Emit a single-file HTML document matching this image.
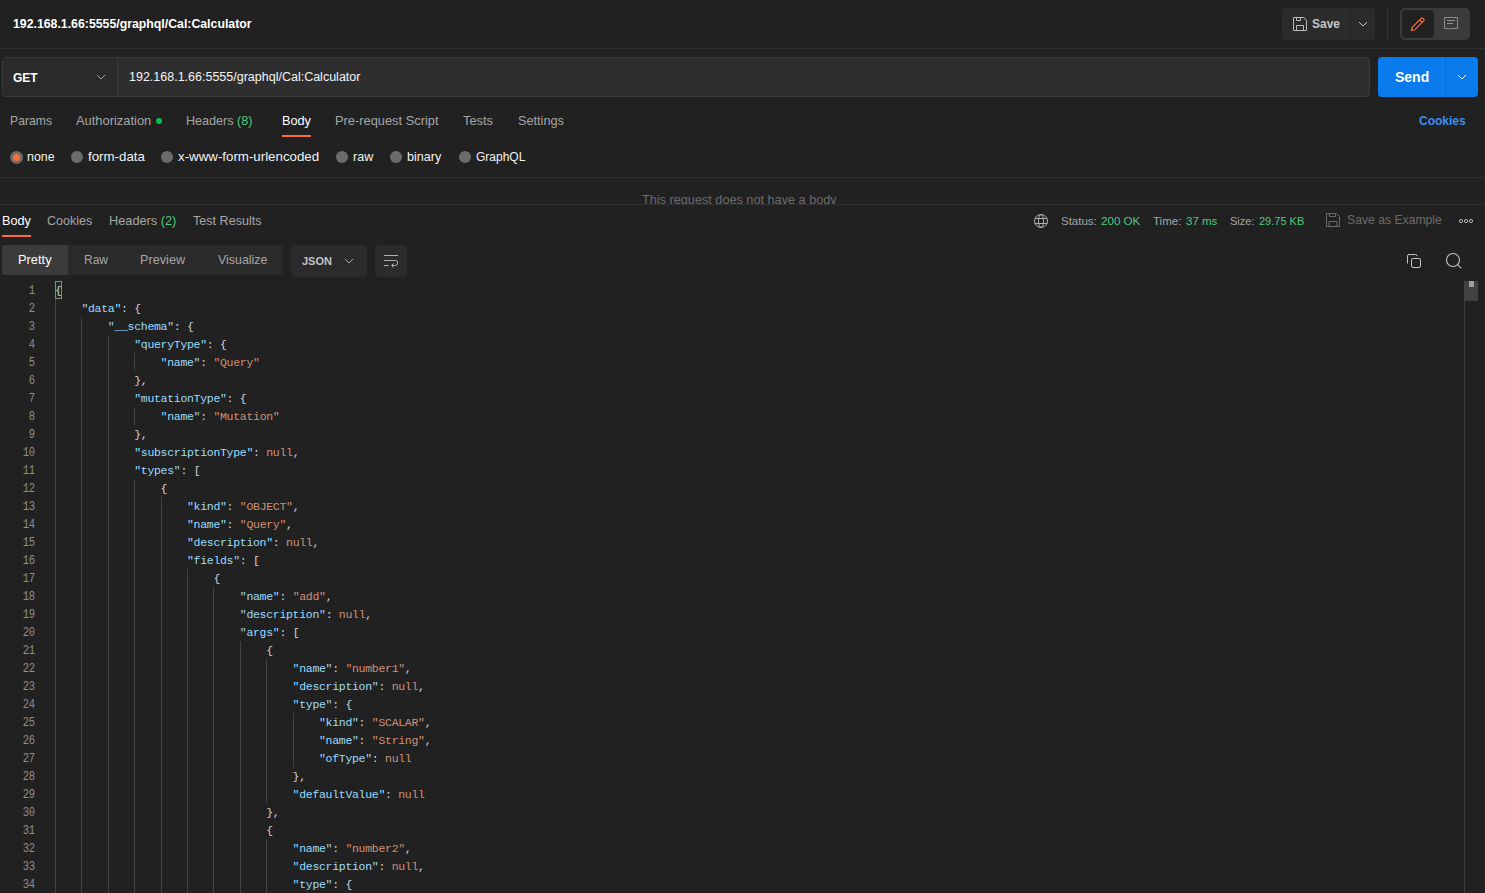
<!DOCTYPE html>
<html><head><meta charset="utf-8">
<style>
*{box-sizing:border-box;margin:0;padding:0}
html,body{width:1485px;height:893px;overflow:hidden;background:#212121;font-family:"Liberation Sans",sans-serif;color:#fff}
.a{position:absolute;white-space:nowrap}
.line{position:absolute;left:0;width:1485px;height:1px;background:#303030}
.tab{position:absolute;top:114px;font-size:12.7px;color:#a6a6a6;line-height:15px}
.rtab{position:absolute;top:214px;font-size:12.7px;color:#a6a6a6;line-height:15px}
.green{color:#4dca7f}
.radio{position:absolute;top:151px;width:12px;height:12px;border-radius:50%;background:#6b6b6b}
.rlbl{position:absolute;top:150px;font-size:12.8px;color:#f2f2f2;line-height:15px}
.g{position:absolute;width:1px;height:18px;background:#44433e}
.ln{position:absolute;left:0;width:35px;text-align:right;font-family:"Liberation Mono",monospace;font-size:12px;letter-spacing:-0.2px;line-height:18px;color:#8e8e8e;height:18px;transform:scaleX(0.88);transform-origin:35px 0}
.cl{position:absolute;font-family:"Liberation Mono",monospace;font-size:11.5px;letter-spacing:-0.3px;line-height:18px;height:18px;white-space:pre;color:#d4d4d4}
.cl i{font-style:normal}
.k{color:#9cdcfe}.s{color:#ce9178}.n{color:#ce9178}.p{color:#d4d4d4}.b{color:#d4d4d4}
</style></head><body>
<!-- header -->
<div class="a" style="left:13px;top:17px;font-size:12.3px;font-weight:700;line-height:15px;color:#fff">192.168.1.66:5555/graphql/Cal:Calculator</div>
<!-- save -->
<div class="a" style="left:1282px;top:8px;width:68px;height:32px;background:#2b2b2b;border-radius:4px 0 0 4px"></div>
<svg class="a" style="left:1292px;top:16px" width="16" height="16" viewBox="0 0 16 16" fill="none" stroke="#bdbdbd" stroke-width="1"><path d="M1.5 1.5h10.2l2.8 2.8v10.2h-13z"/><path d="M4.5 1.5v3h4v-3"/><path d="M4.5 14.5v-5h7v5"/></svg>
<div class="a" style="left:1312px;top:17px;font-size:12px;font-weight:700;line-height:15px;color:#c6c6c6">Save</div>
<div class="a" style="left:1351px;top:8px;width:24px;height:32px;background:#2b2b2b;border-radius:0 4px 4px 0"></div>
<svg class="a" style="left:1358px;top:20px" width="10" height="8" viewBox="0 0 10 8" fill="none" stroke="#c4c4c4" stroke-width="1"><path d="M1 2l4 4l4-4"/></svg>
<div class="a" style="left:1387px;top:8px;width:1px;height:32px;background:#303030"></div>
<div class="a" style="left:1400px;top:8px;width:70px;height:32px;background:#3b3b3b;border-radius:5px"></div>
<div class="a" style="left:1402px;top:10px;width:32px;height:28px;background:#212121;border-radius:4px"></div>
<svg class="a" style="left:1410px;top:16px" width="16" height="16" viewBox="0 0 16 16" fill="none" stroke="#ff6c37" stroke-width="1.2"><path d="M1.5 14.5l0.7-3.2l9-9a1.2 1.2 0 0 1 1.7 0l0.8 0.8a1.2 1.2 0 0 1 0 1.7l-9 9z"/><path d="M9.7 3.8l2.5 2.5"/></svg>
<svg class="a" style="left:1443px;top:16px" width="16" height="16" viewBox="0 0 16 16" fill="none" stroke="#8c8c8c" stroke-width="1"><path d="M1.5 1.5h13v11h-6l-1 1.3l-1-1.3h-5z"/><path d="M4 4.5h8M4 7.5h6"/></svg>
<div class="line" style="top:48px"></div>
<!-- url bar -->
<div class="a" style="left:2px;top:57px;width:1368px;height:40px;background:#2e2e2e;border:1px solid #3a3a3a;border-radius:4px"></div>
<div class="a" style="left:3px;top:58px;width:114px;height:38px;background:#2a2a2a;border-radius:3px 0 0 3px"></div>
<div class="a" style="left:117px;top:58px;width:1px;height:38px;background:#3a3a3a"></div>
<div class="a" style="left:13px;top:71px;font-size:12px;font-weight:700;line-height:15px;color:#fff">GET</div>
<svg class="a" style="left:96px;top:73px" width="10" height="8" viewBox="0 0 10 8" fill="none" stroke="#a0a0a0" stroke-width="1"><path d="M1 2l4 4l4-4"/></svg>
<div class="a" style="left:129px;top:70px;font-size:12.5px;line-height:15px;color:#f4f4f4">192.168.1.66:5555/graphql/Cal:Calculator</div>
<!-- send -->
<div class="a" style="left:1378px;top:57px;width:100px;height:40px;background:#097bed;border-radius:4px"></div>
<div class="a" style="left:1445px;top:57px;width:1px;height:40px;background:#0a6fd6"></div>
<div class="a" style="left:1395px;top:69px;font-size:14px;font-weight:700;line-height:16px;color:#fff">Send</div>
<svg class="a" style="left:1457px;top:73px" width="10" height="8" viewBox="0 0 10 8" fill="none" stroke="#fff" stroke-width="1"><path d="M1 2l4 4l4-4"/></svg>
<!-- tabs -->
<div class="tab" style="left:10px;font-size:12.2px">Params</div>
<div class="tab" style="left:76px;margin-top:-1px;font-size:12.9px">Authorization</div>
<div class="a" style="left:156px;top:118px;width:6px;height:6px;border-radius:50%;background:#0cbb52"></div>
<div class="tab" style="left:186px;font-size:12.6px">Headers <span class="green">(8)</span></div>
<div class="tab" style="left:282px;color:#fff">Body</div>
<div class="a" style="left:282px;top:135px;width:29px;height:2px;background:#ff6c37"></div>
<div class="tab" style="left:335px;margin-top:-1px;font-size:12.85px">Pre-request Script</div>
<div class="tab" style="left:463px;margin-top:-1px;font-size:12.8px">Tests</div>
<div class="tab" style="left:518px">Settings</div>
<div class="a" style="left:1419px;top:114px;font-size:12px;font-weight:700;line-height:15px;color:#3d8ef5">Cookies</div>
<!-- radios -->
<div class="radio" style="left:10px;width:13px;height:13px;background:#6b6b6b"></div>
<div class="a" style="left:13px;top:154px;width:7px;height:7px;border-radius:50%;background:#ff6c37"></div>
<div class="rlbl" style="left:27px;font-size:12.4px">none</div>
<div class="radio" style="left:71px"></div><div class="rlbl" style="left:88px;margin-top:-1px;font-size:13.3px">form-data</div>
<div class="radio" style="left:161px"></div><div class="rlbl" style="left:178px;margin-top:-1px;font-size:13.3px">x-www-form-urlencoded</div>
<div class="radio" style="left:336px"></div><div class="rlbl" style="left:353px;font-size:12.6px">raw</div>
<div class="radio" style="left:390px"></div><div class="rlbl" style="left:407px;font-size:12.6px">binary</div>
<div class="radio" style="left:459px"></div><div class="rlbl" style="left:476px;font-size:12px">GraphQL</div>
<div class="line" style="top:177px"></div>
<div class="a" style="left:0;top:178px;width:1485px;height:26px;overflow:hidden"><div class="a" style="left:642px;top:15px;font-size:12.7px;line-height:15px;color:#6b6b6b">This request does not have a body</div></div>
<div class="line" style="top:204px"></div>
<!-- response tabs -->
<div class="rtab" style="left:2px;color:#fff">Body</div>
<div class="a" style="left:2px;top:235px;width:29px;height:2px;background:#ff6c37"></div>
<div class="rtab" style="left:47px;font-size:12.5px">Cookies</div>
<div class="rtab" style="left:109px;margin-top:-1px;font-size:12.76px">Headers <span class="green">(2)</span></div>
<div class="rtab" style="left:193px;font-size:12.58px">Test Results</div>
<!-- status -->
<svg class="a" style="left:1034px;top:214px" width="14" height="14" viewBox="0 0 14 14" fill="none" stroke="#b0b0b0" stroke-width="1"><circle cx="7" cy="7" r="6.5"/><ellipse cx="7" cy="7" rx="2.5" ry="6.5"/><path d="M1 4.5h12M1 9.5h12"/></svg>
<div class="a" style="left:1061px;top:214px;font-size:11.5px;line-height:14px;color:#a6a6a6">Status:</div><div class="a green" style="left:1101px;top:214px;font-size:11.6px;line-height:14px">200 OK</div>
<div class="a" style="left:1153px;top:214px;font-size:11.5px;line-height:14px;color:#a6a6a6">Time:</div><div class="a green" style="left:1186px;top:214px;font-size:11.5px;line-height:14px">37 ms</div>
<div class="a" style="left:1230px;top:214px;font-size:11px;line-height:14px;color:#a6a6a6">Size:</div><div class="a green" style="left:1259px;top:214px;font-size:11px;line-height:14px">29.75 KB</div>
<svg class="a" style="left:1326px;top:213px" width="14" height="14" viewBox="0 0 14 14" fill="none" stroke="#6b6b6b" stroke-width="1"><path d="M0.5 0.5h10l3 3v10h-13z"/><path d="M3.5 0.5v3h6v-3"/><path d="M3 13.5v-5h8v5"/></svg>
<div class="a" style="left:1347px;top:213px;font-size:12.2px;line-height:15px;color:#6b6b6b">Save as Example</div>
<svg class="a" style="left:1458px;top:218px" width="16" height="6" viewBox="0 0 16 6" fill="none" stroke="#b4b4b4" stroke-width="1"><circle cx="3" cy="3" r="1.6"/><circle cx="8" cy="3" r="1.6"/><circle cx="13" cy="3" r="1.6"/></svg>
<!-- segmented -->
<div class="a" style="left:2px;top:245px;width:281px;height:30px;background:#2b2b2b;border-radius:4px"></div>
<div class="a" style="left:2px;top:245px;width:66px;height:30px;background:#3b3b3b;border-radius:4px 0 0 4px"></div>
<div class="a" style="left:18px;top:252px;font-size:12.86px;line-height:15px;color:#fff">Pretty</div>
<div class="a" style="left:84px;top:253px;font-size:12px;line-height:15px;color:#a6a6a6">Raw</div>
<div class="a" style="left:140px;top:253px;font-size:12.7px;line-height:15px;color:#a6a6a6">Preview</div>
<div class="a" style="left:218px;top:253px;font-size:12.4px;line-height:15px;color:#a6a6a6">Visualize</div>
<div class="a" style="left:291px;top:245px;width:76px;height:32px;background:#2b2b2b;border-radius:4px"></div>
<div class="a" style="left:302px;top:254px;font-size:11px;font-weight:700;line-height:14px;color:#c4c4c4">JSON</div>
<svg class="a" style="left:344px;top:257px" width="10" height="8" viewBox="0 0 10 8" fill="none" stroke="#a0a0a0" stroke-width="1"><path d="M1 2l4 4l4-4"/></svg>
<div class="a" style="left:375px;top:245px;width:32px;height:32px;background:#2b2b2b;border-radius:4px"></div>
<svg class="a" style="left:383px;top:254px" width="16" height="14" viewBox="0 0 16 14" fill="none" stroke="#b0b0b0" stroke-width="1"><path d="M1 1.5h14M1 6.5h11.2a2.5 2.5 0 0 1 0 5h-3.2M10.5 9.5l-2 2l2 2M1 11.5h4.5"/></svg>
<svg class="a" style="left:1406px;top:253px" width="16" height="16" viewBox="0 0 16 16" fill="none" stroke="#c4c4c4" stroke-width="1"><path d="M1.5 10.5v-7.5a1.5 1.5 0 0 1 1.5-1.5h6.5a1.5 1.5 0 0 1 1.5 1.5"/><rect x="5.5" y="5.5" width="9" height="9" rx="1.5"/></svg>
<svg class="a" style="left:1445px;top:252px" width="18" height="18" viewBox="0 0 18 18" fill="none" stroke="#c4c4c4" stroke-width="1.1"><circle cx="8" cy="8" r="6.5"/><path d="M12.8 12.8l3.5 3.5"/></svg>
<!-- code -->
<div class="a" style="left:55px;top:281px;width:7px;height:18px;border:1px solid #888;background:#1e2a20"></div>
<div class="g" style="left:55px;top:299px"></div>
<div class="g" style="left:55px;top:317px"></div>
<div class="g" style="left:81px;top:317px"></div>
<div class="g" style="left:55px;top:335px"></div>
<div class="g" style="left:81px;top:335px"></div>
<div class="g" style="left:108px;top:335px"></div>
<div class="g" style="left:55px;top:353px"></div>
<div class="g" style="left:81px;top:353px"></div>
<div class="g" style="left:108px;top:353px"></div>
<div class="g" style="left:134px;top:353px"></div>
<div class="g" style="left:55px;top:371px"></div>
<div class="g" style="left:81px;top:371px"></div>
<div class="g" style="left:108px;top:371px"></div>
<div class="g" style="left:55px;top:389px"></div>
<div class="g" style="left:81px;top:389px"></div>
<div class="g" style="left:108px;top:389px"></div>
<div class="g" style="left:55px;top:407px"></div>
<div class="g" style="left:81px;top:407px"></div>
<div class="g" style="left:108px;top:407px"></div>
<div class="g" style="left:134px;top:407px"></div>
<div class="g" style="left:55px;top:425px"></div>
<div class="g" style="left:81px;top:425px"></div>
<div class="g" style="left:108px;top:425px"></div>
<div class="g" style="left:55px;top:443px"></div>
<div class="g" style="left:81px;top:443px"></div>
<div class="g" style="left:108px;top:443px"></div>
<div class="g" style="left:55px;top:461px"></div>
<div class="g" style="left:81px;top:461px"></div>
<div class="g" style="left:108px;top:461px"></div>
<div class="g" style="left:55px;top:479px"></div>
<div class="g" style="left:81px;top:479px"></div>
<div class="g" style="left:108px;top:479px"></div>
<div class="g" style="left:134px;top:479px"></div>
<div class="g" style="left:55px;top:497px"></div>
<div class="g" style="left:81px;top:497px"></div>
<div class="g" style="left:108px;top:497px"></div>
<div class="g" style="left:134px;top:497px"></div>
<div class="g" style="left:161px;top:497px"></div>
<div class="g" style="left:55px;top:515px"></div>
<div class="g" style="left:81px;top:515px"></div>
<div class="g" style="left:108px;top:515px"></div>
<div class="g" style="left:134px;top:515px"></div>
<div class="g" style="left:161px;top:515px"></div>
<div class="g" style="left:55px;top:533px"></div>
<div class="g" style="left:81px;top:533px"></div>
<div class="g" style="left:108px;top:533px"></div>
<div class="g" style="left:134px;top:533px"></div>
<div class="g" style="left:161px;top:533px"></div>
<div class="g" style="left:55px;top:551px"></div>
<div class="g" style="left:81px;top:551px"></div>
<div class="g" style="left:108px;top:551px"></div>
<div class="g" style="left:134px;top:551px"></div>
<div class="g" style="left:161px;top:551px"></div>
<div class="g" style="left:55px;top:569px"></div>
<div class="g" style="left:81px;top:569px"></div>
<div class="g" style="left:108px;top:569px"></div>
<div class="g" style="left:134px;top:569px"></div>
<div class="g" style="left:161px;top:569px"></div>
<div class="g" style="left:187px;top:569px"></div>
<div class="g" style="left:55px;top:587px"></div>
<div class="g" style="left:81px;top:587px"></div>
<div class="g" style="left:108px;top:587px"></div>
<div class="g" style="left:134px;top:587px"></div>
<div class="g" style="left:161px;top:587px"></div>
<div class="g" style="left:187px;top:587px"></div>
<div class="g" style="left:213px;top:587px"></div>
<div class="g" style="left:55px;top:605px"></div>
<div class="g" style="left:81px;top:605px"></div>
<div class="g" style="left:108px;top:605px"></div>
<div class="g" style="left:134px;top:605px"></div>
<div class="g" style="left:161px;top:605px"></div>
<div class="g" style="left:187px;top:605px"></div>
<div class="g" style="left:213px;top:605px"></div>
<div class="g" style="left:55px;top:623px"></div>
<div class="g" style="left:81px;top:623px"></div>
<div class="g" style="left:108px;top:623px"></div>
<div class="g" style="left:134px;top:623px"></div>
<div class="g" style="left:161px;top:623px"></div>
<div class="g" style="left:187px;top:623px"></div>
<div class="g" style="left:213px;top:623px"></div>
<div class="g" style="left:55px;top:641px"></div>
<div class="g" style="left:81px;top:641px"></div>
<div class="g" style="left:108px;top:641px"></div>
<div class="g" style="left:134px;top:641px"></div>
<div class="g" style="left:161px;top:641px"></div>
<div class="g" style="left:187px;top:641px"></div>
<div class="g" style="left:213px;top:641px"></div>
<div class="g" style="left:240px;top:641px"></div>
<div class="g" style="left:55px;top:659px"></div>
<div class="g" style="left:81px;top:659px"></div>
<div class="g" style="left:108px;top:659px"></div>
<div class="g" style="left:134px;top:659px"></div>
<div class="g" style="left:161px;top:659px"></div>
<div class="g" style="left:187px;top:659px"></div>
<div class="g" style="left:213px;top:659px"></div>
<div class="g" style="left:240px;top:659px"></div>
<div class="g" style="left:266px;top:659px"></div>
<div class="g" style="left:55px;top:677px"></div>
<div class="g" style="left:81px;top:677px"></div>
<div class="g" style="left:108px;top:677px"></div>
<div class="g" style="left:134px;top:677px"></div>
<div class="g" style="left:161px;top:677px"></div>
<div class="g" style="left:187px;top:677px"></div>
<div class="g" style="left:213px;top:677px"></div>
<div class="g" style="left:240px;top:677px"></div>
<div class="g" style="left:266px;top:677px"></div>
<div class="g" style="left:55px;top:695px"></div>
<div class="g" style="left:81px;top:695px"></div>
<div class="g" style="left:108px;top:695px"></div>
<div class="g" style="left:134px;top:695px"></div>
<div class="g" style="left:161px;top:695px"></div>
<div class="g" style="left:187px;top:695px"></div>
<div class="g" style="left:213px;top:695px"></div>
<div class="g" style="left:240px;top:695px"></div>
<div class="g" style="left:266px;top:695px"></div>
<div class="g" style="left:55px;top:713px"></div>
<div class="g" style="left:81px;top:713px"></div>
<div class="g" style="left:108px;top:713px"></div>
<div class="g" style="left:134px;top:713px"></div>
<div class="g" style="left:161px;top:713px"></div>
<div class="g" style="left:187px;top:713px"></div>
<div class="g" style="left:213px;top:713px"></div>
<div class="g" style="left:240px;top:713px"></div>
<div class="g" style="left:266px;top:713px"></div>
<div class="g" style="left:293px;top:713px"></div>
<div class="g" style="left:55px;top:731px"></div>
<div class="g" style="left:81px;top:731px"></div>
<div class="g" style="left:108px;top:731px"></div>
<div class="g" style="left:134px;top:731px"></div>
<div class="g" style="left:161px;top:731px"></div>
<div class="g" style="left:187px;top:731px"></div>
<div class="g" style="left:213px;top:731px"></div>
<div class="g" style="left:240px;top:731px"></div>
<div class="g" style="left:266px;top:731px"></div>
<div class="g" style="left:293px;top:731px"></div>
<div class="g" style="left:55px;top:749px"></div>
<div class="g" style="left:81px;top:749px"></div>
<div class="g" style="left:108px;top:749px"></div>
<div class="g" style="left:134px;top:749px"></div>
<div class="g" style="left:161px;top:749px"></div>
<div class="g" style="left:187px;top:749px"></div>
<div class="g" style="left:213px;top:749px"></div>
<div class="g" style="left:240px;top:749px"></div>
<div class="g" style="left:266px;top:749px"></div>
<div class="g" style="left:293px;top:749px"></div>
<div class="g" style="left:55px;top:767px"></div>
<div class="g" style="left:81px;top:767px"></div>
<div class="g" style="left:108px;top:767px"></div>
<div class="g" style="left:134px;top:767px"></div>
<div class="g" style="left:161px;top:767px"></div>
<div class="g" style="left:187px;top:767px"></div>
<div class="g" style="left:213px;top:767px"></div>
<div class="g" style="left:240px;top:767px"></div>
<div class="g" style="left:266px;top:767px"></div>
<div class="g" style="left:55px;top:785px"></div>
<div class="g" style="left:81px;top:785px"></div>
<div class="g" style="left:108px;top:785px"></div>
<div class="g" style="left:134px;top:785px"></div>
<div class="g" style="left:161px;top:785px"></div>
<div class="g" style="left:187px;top:785px"></div>
<div class="g" style="left:213px;top:785px"></div>
<div class="g" style="left:240px;top:785px"></div>
<div class="g" style="left:266px;top:785px"></div>
<div class="g" style="left:55px;top:803px"></div>
<div class="g" style="left:81px;top:803px"></div>
<div class="g" style="left:108px;top:803px"></div>
<div class="g" style="left:134px;top:803px"></div>
<div class="g" style="left:161px;top:803px"></div>
<div class="g" style="left:187px;top:803px"></div>
<div class="g" style="left:213px;top:803px"></div>
<div class="g" style="left:240px;top:803px"></div>
<div class="g" style="left:55px;top:821px"></div>
<div class="g" style="left:81px;top:821px"></div>
<div class="g" style="left:108px;top:821px"></div>
<div class="g" style="left:134px;top:821px"></div>
<div class="g" style="left:161px;top:821px"></div>
<div class="g" style="left:187px;top:821px"></div>
<div class="g" style="left:213px;top:821px"></div>
<div class="g" style="left:240px;top:821px"></div>
<div class="g" style="left:55px;top:839px"></div>
<div class="g" style="left:81px;top:839px"></div>
<div class="g" style="left:108px;top:839px"></div>
<div class="g" style="left:134px;top:839px"></div>
<div class="g" style="left:161px;top:839px"></div>
<div class="g" style="left:187px;top:839px"></div>
<div class="g" style="left:213px;top:839px"></div>
<div class="g" style="left:240px;top:839px"></div>
<div class="g" style="left:266px;top:839px"></div>
<div class="g" style="left:55px;top:857px"></div>
<div class="g" style="left:81px;top:857px"></div>
<div class="g" style="left:108px;top:857px"></div>
<div class="g" style="left:134px;top:857px"></div>
<div class="g" style="left:161px;top:857px"></div>
<div class="g" style="left:187px;top:857px"></div>
<div class="g" style="left:213px;top:857px"></div>
<div class="g" style="left:240px;top:857px"></div>
<div class="g" style="left:266px;top:857px"></div>
<div class="g" style="left:55px;top:875px"></div>
<div class="g" style="left:81px;top:875px"></div>
<div class="g" style="left:108px;top:875px"></div>
<div class="g" style="left:134px;top:875px"></div>
<div class="g" style="left:161px;top:875px"></div>
<div class="g" style="left:187px;top:875px"></div>
<div class="g" style="left:213px;top:875px"></div>
<div class="g" style="left:240px;top:875px"></div>
<div class="g" style="left:266px;top:875px"></div>
<div class="ln" style="top:282px">1</div>
<div class="cl" style="top:282px;left:55.0px"><i class="b">{</i></div>
<div class="ln" style="top:300px">2</div>
<div class="cl" style="top:300px;left:81.4px"><i class="k">&quot;data&quot;</i><i class="p">:</i> <i class="b">{</i></div>
<div class="ln" style="top:318px">3</div>
<div class="cl" style="top:318px;left:107.8px"><i class="k">&quot;__schema&quot;</i><i class="p">:</i> <i class="b">{</i></div>
<div class="ln" style="top:336px">4</div>
<div class="cl" style="top:336px;left:134.2px"><i class="k">&quot;queryType&quot;</i><i class="p">:</i> <i class="b">{</i></div>
<div class="ln" style="top:354px">5</div>
<div class="cl" style="top:354px;left:160.6px"><i class="k">&quot;name&quot;</i><i class="p">:</i> <i class="s">&quot;Query&quot;</i></div>
<div class="ln" style="top:372px">6</div>
<div class="cl" style="top:372px;left:134.2px"><i class="b">}</i><i class="p">,</i></div>
<div class="ln" style="top:390px">7</div>
<div class="cl" style="top:390px;left:134.2px"><i class="k">&quot;mutationType&quot;</i><i class="p">:</i> <i class="b">{</i></div>
<div class="ln" style="top:408px">8</div>
<div class="cl" style="top:408px;left:160.6px"><i class="k">&quot;name&quot;</i><i class="p">:</i> <i class="s">&quot;Mutation&quot;</i></div>
<div class="ln" style="top:426px">9</div>
<div class="cl" style="top:426px;left:134.2px"><i class="b">}</i><i class="p">,</i></div>
<div class="ln" style="top:444px">10</div>
<div class="cl" style="top:444px;left:134.2px"><i class="k">&quot;subscriptionType&quot;</i><i class="p">:</i> <i class="n">null</i><i class="p">,</i></div>
<div class="ln" style="top:462px">11</div>
<div class="cl" style="top:462px;left:134.2px"><i class="k">&quot;types&quot;</i><i class="p">:</i> <i class="b">[</i></div>
<div class="ln" style="top:480px">12</div>
<div class="cl" style="top:480px;left:160.6px"><i class="b">{</i></div>
<div class="ln" style="top:498px">13</div>
<div class="cl" style="top:498px;left:187.0px"><i class="k">&quot;kind&quot;</i><i class="p">:</i> <i class="s">&quot;OBJECT&quot;</i><i class="p">,</i></div>
<div class="ln" style="top:516px">14</div>
<div class="cl" style="top:516px;left:187.0px"><i class="k">&quot;name&quot;</i><i class="p">:</i> <i class="s">&quot;Query&quot;</i><i class="p">,</i></div>
<div class="ln" style="top:534px">15</div>
<div class="cl" style="top:534px;left:187.0px"><i class="k">&quot;description&quot;</i><i class="p">:</i> <i class="n">null</i><i class="p">,</i></div>
<div class="ln" style="top:552px">16</div>
<div class="cl" style="top:552px;left:187.0px"><i class="k">&quot;fields&quot;</i><i class="p">:</i> <i class="b">[</i></div>
<div class="ln" style="top:570px">17</div>
<div class="cl" style="top:570px;left:213.4px"><i class="b">{</i></div>
<div class="ln" style="top:588px">18</div>
<div class="cl" style="top:588px;left:239.8px"><i class="k">&quot;name&quot;</i><i class="p">:</i> <i class="s">&quot;add&quot;</i><i class="p">,</i></div>
<div class="ln" style="top:606px">19</div>
<div class="cl" style="top:606px;left:239.8px"><i class="k">&quot;description&quot;</i><i class="p">:</i> <i class="n">null</i><i class="p">,</i></div>
<div class="ln" style="top:624px">20</div>
<div class="cl" style="top:624px;left:239.8px"><i class="k">&quot;args&quot;</i><i class="p">:</i> <i class="b">[</i></div>
<div class="ln" style="top:642px">21</div>
<div class="cl" style="top:642px;left:266.2px"><i class="b">{</i></div>
<div class="ln" style="top:660px">22</div>
<div class="cl" style="top:660px;left:292.6px"><i class="k">&quot;name&quot;</i><i class="p">:</i> <i class="s">&quot;number1&quot;</i><i class="p">,</i></div>
<div class="ln" style="top:678px">23</div>
<div class="cl" style="top:678px;left:292.6px"><i class="k">&quot;description&quot;</i><i class="p">:</i> <i class="n">null</i><i class="p">,</i></div>
<div class="ln" style="top:696px">24</div>
<div class="cl" style="top:696px;left:292.6px"><i class="k">&quot;type&quot;</i><i class="p">:</i> <i class="b">{</i></div>
<div class="ln" style="top:714px">25</div>
<div class="cl" style="top:714px;left:319.0px"><i class="k">&quot;kind&quot;</i><i class="p">:</i> <i class="s">&quot;SCALAR&quot;</i><i class="p">,</i></div>
<div class="ln" style="top:732px">26</div>
<div class="cl" style="top:732px;left:319.0px"><i class="k">&quot;name&quot;</i><i class="p">:</i> <i class="s">&quot;String&quot;</i><i class="p">,</i></div>
<div class="ln" style="top:750px">27</div>
<div class="cl" style="top:750px;left:319.0px"><i class="k">&quot;ofType&quot;</i><i class="p">:</i> <i class="n">null</i></div>
<div class="ln" style="top:768px">28</div>
<div class="cl" style="top:768px;left:292.6px"><i class="b">}</i><i class="p">,</i></div>
<div class="ln" style="top:786px">29</div>
<div class="cl" style="top:786px;left:292.6px"><i class="k">&quot;defaultValue&quot;</i><i class="p">:</i> <i class="n">null</i></div>
<div class="ln" style="top:804px">30</div>
<div class="cl" style="top:804px;left:266.2px"><i class="b">}</i><i class="p">,</i></div>
<div class="ln" style="top:822px">31</div>
<div class="cl" style="top:822px;left:266.2px"><i class="b">{</i></div>
<div class="ln" style="top:840px">32</div>
<div class="cl" style="top:840px;left:292.6px"><i class="k">&quot;name&quot;</i><i class="p">:</i> <i class="s">&quot;number2&quot;</i><i class="p">,</i></div>
<div class="ln" style="top:858px">33</div>
<div class="cl" style="top:858px;left:292.6px"><i class="k">&quot;description&quot;</i><i class="p">:</i> <i class="n">null</i><i class="p">,</i></div>
<div class="ln" style="top:876px">34</div>
<div class="cl" style="top:876px;left:292.6px"><i class="k">&quot;type&quot;</i><i class="p">:</i> <i class="b">{</i></div>
<!-- scrollbar -->
<div class="a" style="left:1464px;top:281px;width:1px;height:612px;background:#3b3b3b"></div>
<div class="a" style="left:1464px;top:281px;width:14px;height:20px;background:#424242"></div>
<div class="a" style="left:1469px;top:281px;width:5px;height:6px;background:#9e9e9e"></div>
</body></html>
